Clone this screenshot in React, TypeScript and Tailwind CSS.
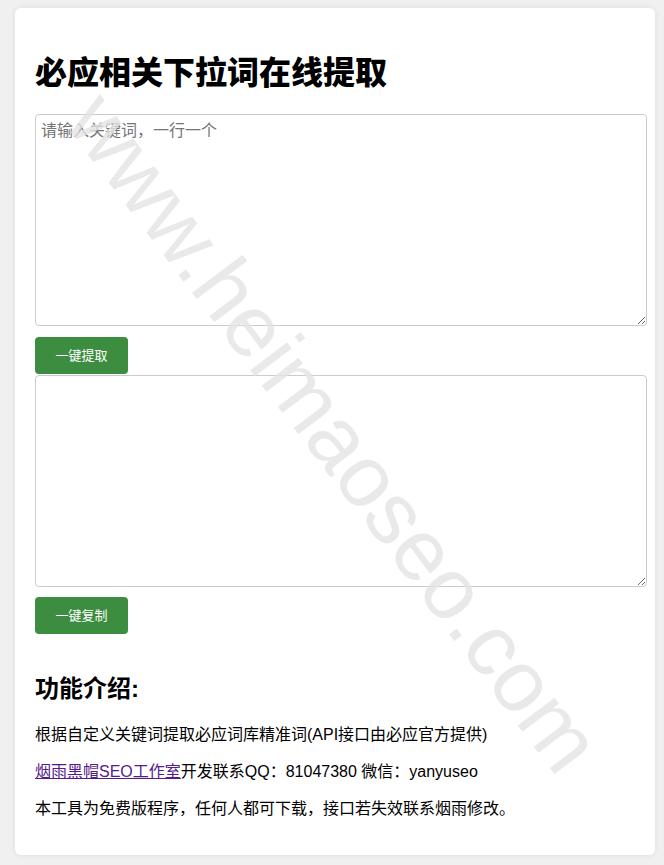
import React from 'react';

const font = { fontFamily: '"Liberation Sans", Arial, "Noto Sans CJK SC", sans-serif' };

const App = () => {
  return (
    <div className="relative min-h-[865px] bg-[#f0f0f0] pt-[8px] pb-[10px] overflow-hidden" style={font}>
      <div className="mx-[15px] w-[640px] rounded-[6px] bg-white px-5 py-5 shadow-[0_0_6px_rgba(0,0,0,0.08)] text-black">
        <h1 className="mt-[22px] mb-[18px] text-[32px] leading-[46px] font-black">必应相关下拉词在线提取</h1>

        <textarea
          className="block box-border w-[612px] h-[212px] rounded-[4px] border border-[#cccccc] bg-white p-[5px] text-[16px] leading-[22px] placeholder:text-[#757575] outline-none"
          style={font}
          placeholder="请输入关键词，一行一个"
        />
        <button className="mt-[11px] block h-[37px] w-[93px] rounded-[4px] bg-[#3d8d40] text-[13px] text-white">
          一键提取
        </button>

        <textarea
          className="mt-[1px] block box-border w-[612px] h-[212px] rounded-[4px] border border-[#cccccc] bg-white p-[5px] text-[16px] leading-[22px] outline-none"
          style={font}
        />
        <button className="mt-[10px] block h-[37px] w-[93px] rounded-[4px] bg-[#3d8d40] text-[13px] text-white">
          一键复制
        </button>

        <h2 className="mt-[38px] mb-[18px] text-[24px] leading-[34px] font-bold">功能介绍:</h2>
        <p className="my-4 text-[16px] leading-[21px]">根据自定义关键词提取必应词库精准词(API接口由必应官方提供)</p>
        <p className="my-4 text-[16px] leading-[21px]">
          <a href="#" className="text-[#551a8b] underline">烟雨黑帽SEO工作室</a>开发联系QQ：81047380 微信：yanyuseo
        </p>
        <p className="mt-4 mb-4 text-[16px] leading-[21px]">本工具为免费版程序，任何人都可下载，接口若失效联系烟雨修改。</p>
      </div>

      {/* watermark */}
      <div className="pointer-events-none absolute left-[335px] top-[432px]">
        <span className="absolute left-0 top-0 block whitespace-nowrap text-[87px] leading-none text-[#e4e4e4] opacity-80 -translate-x-1/2 -translate-y-1/2 rotate-[53deg]">
          www.heimaoseo.com
        </span>
      </div>
    </div>
  );
};

export default App;
